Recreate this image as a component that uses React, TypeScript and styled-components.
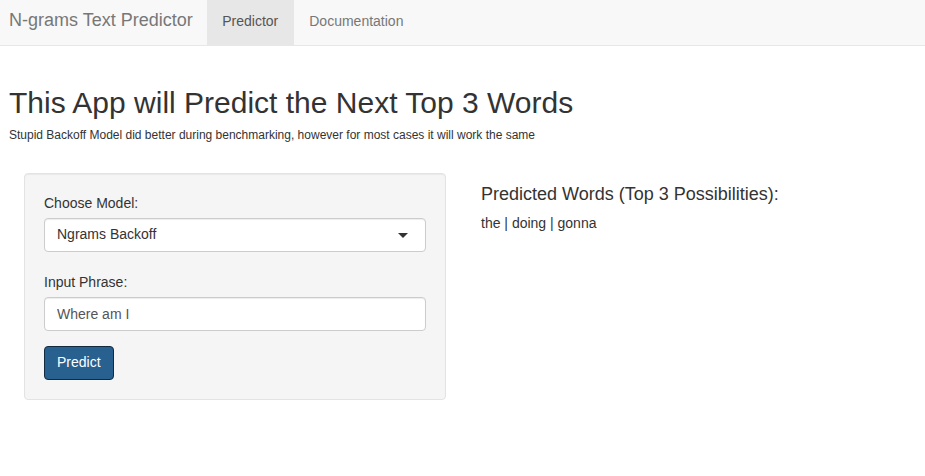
import React from "react";
import styled, { createGlobalStyle } from "styled-components";

const Global = createGlobalStyle`
  * { box-sizing: border-box; }
  html, body { margin: 0; padding: 0; background: #fff; }
  body {
    font-family: "Liberation Sans", Arial, Helvetica, sans-serif;
    font-size: 14px;
    line-height: 1.42857;
    color: #333;
  }
`;

const Navbar = styled.nav`
  display: flex;
  align-items: stretch;
  height: 46px;
  background: #f8f8f8;
  border-bottom: 1px solid #e7e7e7;
`;

const Brand = styled.a`
  font-size: 18px;
  line-height: 20px;
  color: #777;
  padding: 10px 14px 0 9px;
  text-decoration: none;
`;

const NavList = styled.ul`
  display: flex;
  list-style: none;
  margin: 0;
  padding: 0;
`;

const NavLink = styled.a<{ $active?: boolean }>`
  display: block;
  height: 45px;
  padding: 11px 15.5px 0;
  line-height: 20px;
  color: ${(p) => (p.$active ? "#555" : "#777")};
  background: ${(p) => (p.$active ? "#e7e7e7" : "transparent")};
  text-decoration: none;
`;

const Page = styled.div`
  padding: 0 9px;
`;

const Title = styled.h2`
  font-size: 30px;
  font-weight: 500;
  line-height: 1.1;
  margin: 40px 0 10px;
  color: #333;
`;

const Subtitle = styled.h6`
  font-size: 12px;
  font-weight: 500;
  line-height: 1.1;
  margin: 0;
  color: #333;
`;

const Row = styled.div`
  display: flex;
  margin-top: 31px;
`;

const Sidebar = styled.div`
  width: 452px;
  padding: 0 15px;
  flex: none;
`;

const Main = styled.div`
  flex: 1;
  padding-left: 20px;
`;

const Well = styled.form`
  background: #f5f5f5;
  border: 1px solid #e3e3e3;
  border-radius: 4px;
  box-shadow: inset 0 1px 1px rgba(0, 0, 0, 0.05);
  padding: 19px;
  min-height: 20px;
`;

const FormGroup = styled.div<{ $gap?: number }>`
  margin-bottom: ${(p) => p.$gap ?? 15}px;
`;

const Label = styled.label`
  display: block;
  margin-bottom: 5px;
  line-height: 20px;
  color: #333;
`;

const SelectBox = styled.div`
  display: flex;
  align-items: center;
  justify-content: space-between;
  height: 34px;
  padding: 0 17px 0 12px;
  background: #fff;
  border: 1px solid #ccc;
  border-radius: 4px;
  box-shadow: inset 0 1px 1px rgba(0, 0, 0, 0.075);
  color: #333;
`;

const Caret = styled.span`
  width: 0;
  height: 0;
  border-left: 5px solid transparent;
  border-right: 5px solid transparent;
  border-top: 5px solid #333;
  margin-top: 1px;
`;

const TextInput = styled.input`
  display: block;
  width: 100%;
  height: 34px;
  padding: 6px 12px;
  font: inherit;
  color: #555;
  background: #fff;
  border: 1px solid #ccc;
  border-radius: 4px;
  box-shadow: inset 0 1px 1px rgba(0, 0, 0, 0.075);
  outline: none;
`;

const Button = styled.button`
  display: inline-block;
  height: 34px;
  padding: 6px 12px;
  font: inherit;
  line-height: 1.42857;
  color: #fff;
  background: #286090;
  border: 1px solid #122b40;
  border-radius: 4px;
  cursor: pointer;
`;

const ResultTitle = styled.h4`
  font-size: 18px;
  font-weight: 500;
  line-height: 1.1;
  margin: 12px 0 8px;
  color: #333;
`;

const ResultText = styled.div`
  line-height: 20px;
  color: #333;
`;

export default function App() {
  return (
    <>
      <Global />
      <Navbar>
        <Brand>N-grams Text Predictor</Brand>
        <NavList>
          <li>
            <NavLink $active>Predictor</NavLink>
          </li>
          <li>
            <NavLink>Documentation</NavLink>
          </li>
        </NavList>
      </Navbar>
      <Page>
        <Title>This App will Predict the Next Top 3 Words</Title>
        <Subtitle>
          Stupid Backoff Model did better during benchmarking, however for most cases it will work the same
        </Subtitle>
        <Row>
          <Sidebar>
            <Well onSubmit={(e) => e.preventDefault()}>
              <FormGroup $gap={20}>
                <Label>Choose Model:</Label>
                <SelectBox>
                  <span>Ngrams Backoff</span>
                  <Caret />
                </SelectBox>
              </FormGroup>
              <FormGroup>
                <Label>Input Phrase:</Label>
                <TextInput defaultValue="Where am I" />
              </FormGroup>
              <Button type="button">Predict</Button>
            </Well>
          </Sidebar>
          <Main>
            <ResultTitle>Predicted Words (Top 3 Possibilities):</ResultTitle>
            <ResultText>the | doing | gonna</ResultText>
          </Main>
        </Row>
      </Page>
    </>
  );
}
